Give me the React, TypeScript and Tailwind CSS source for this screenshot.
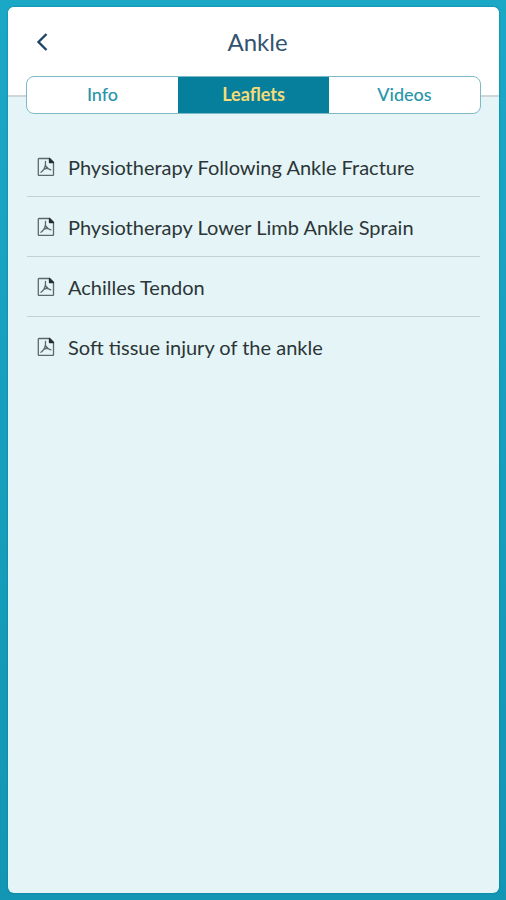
import { useState } from "react";

interface Leaflet {
  id: number;
  title: string;
}

const TABS = ["Info", "Leaflets", "Videos"];

const LEAFLETS: Leaflet[] = [
  { id: 1, title: "Physiotherapy Following Ankle Fracture" },
  { id: 2, title: "Physiotherapy Lower Limb Ankle Sprain" },
  { id: 3, title: "Achilles Tendon" },
  { id: 4, title: "Soft tissue injury of the ankle" },
];

function BackIcon() {
  return (
    <svg width="12" height="18" viewBox="0 0 12 18" fill="none" aria-hidden="true">
      <path d="M10.5 1 2.500 9l8 8" stroke="#1f4468" strokeWidth="2.4" />
    </svg>
  );
}

function PdfIcon() {
  return (
    <svg
      width="18"
      height="20"
      viewBox="0 0 18 20"
      fill="none"
      stroke="#5c696b"
      strokeWidth="1.3"
      strokeLinejoin="round"
      strokeLinecap="round"
      className="shrink-0"
      aria-hidden="true"
    >
      <path d="M2 1.5h10.500l4 4v12.200a.7.7 0 0 1-.7.7H2a.7.7 0 0 1-.7-.7V2.200a.7.7 0 0 1 .7-.7Z" />
      <path d="M12.500 1.500v4h4Z" fill="#263033" stroke="#263033" />
      <path d="M8.500 4.500c.4 3-.1 5.500-1.500 7.700-.8 1.300-1.800 2.300-3 3.100M8.600 8.500c.9 2.200 2.600 3.600 5.200 4.300M6.800 12.300c1.500-.7 3-1 4.400-1" />
    </svg>
  );
}

export default function App() {
  const [activeTab, setActiveTab] = useState("Leaflets");

  return (
    <div className="min-h-screen flex bg-linear-to-b from-[#1ba8c6] to-[#1296b3] py-[7px] pr-[7px] pl-2 font-[Lato,sans-serif]">
      <div className="flex-1 flex flex-col rounded-md overflow-hidden bg-[#e5f4f6] shadow-[0_0_2px_#08738c]">
        <header className="h-[90px] grid grid-cols-[1fr_auto_1fr] items-start bg-white border-b-2 border-[#cfd6d8] pl-5 pr-3 pt-[19px]">
          <button aria-label="Back" className="w-7 h-8 flex items-center justify-center">
            <BackIcon />
          </button>
          <h1 className="text-2xl leading-8 text-[#335470]">Ankle</h1>
        </header>

        <nav className="relative -mt-[21px] mx-[18px] h-[38px] flex rounded-lg overflow-hidden bg-white border border-[#7bb9c6]">
          {TABS.map((tab) => (
            <button
              key={tab}
              onClick={() => setActiveTab(tab)}
              className={
                tab === activeTab
                  ? "flex-1 pb-0.5 text-lg font-bold bg-[#057f9b] text-[#f5dc78]"
                  : "flex-1 pb-0.5 text-lg font-medium text-[#2795a9]"
              }
            >
              {tab}
            </button>
          ))}
        </nav>

        <main className="pt-[23px] px-[19px]">
          <ul className="divide-y divide-[#c3d1d3]">
            {LEAFLETS.map((leaflet) => (
              <li key={leaflet.id}>
                <a href="#" className="h-[59px] flex items-center gap-[13px] pl-[10px] text-xl text-[#2c3638]">
                  <PdfIcon />
                  {leaflet.title}
                </a>
              </li>
            ))}
          </ul>
        </main>
      </div>
    </div>
  );
}
